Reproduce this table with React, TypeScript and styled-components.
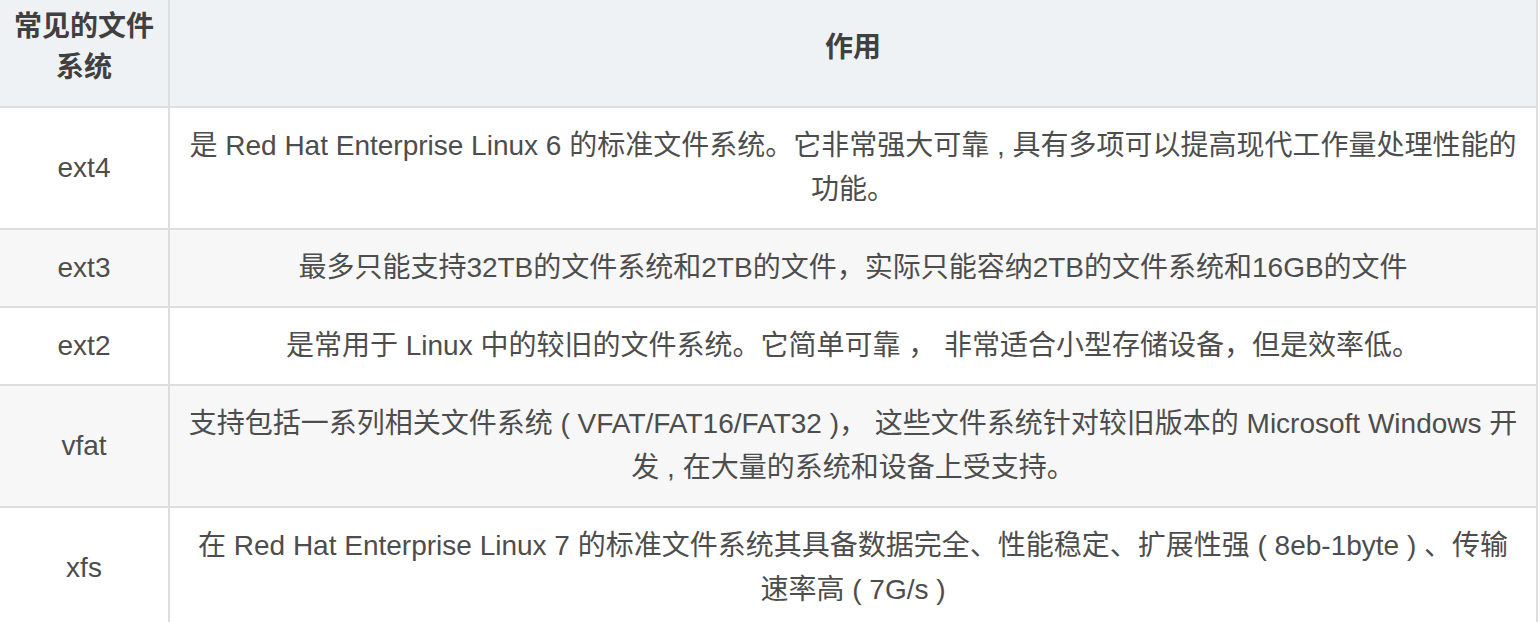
import styled, { createGlobalStyle } from "styled-components";

const GlobalStyle = createGlobalStyle`
    html, body {
        margin: 0;
        padding: 0;
        background: #ffffff;
    }
    body {
        font-family: "Liberation Sans", "Noto Sans CJK SC", sans-serif;
        color: #4d4d4d;
        overflow: hidden;
    }
`;

const Table = styled.table`
    width: 1538px;
    table-layout: fixed;
    border-collapse: separate;
    border-spacing: 0;
    font-size: 28px;
`;

const HeadCell = styled.th`
    background: #eff2f5;
    color: #404040;
    font-weight: 700;
    line-height: 41px;
    padding: 6px 10px 18px;
    text-align: center;
    vertical-align: middle;
    border-right: 2px solid #dedede;
    border-bottom: 2px solid #dedede;
`;

const Row = styled.tr<{ $striped?: boolean }>`
    background: ${props => (props.$striped ? "#f7f7f7" : "#ffffff")};
`;

const Cell = styled.td`
    line-height: 44px;
    padding: 16px 17px;
    text-align: center;
    vertical-align: middle;
    border-right: 2px solid #dedede;
    border-bottom: 2px solid #dedede;
`;

interface IFileSystem {
    name: string;
    desc: string;
}

const systems: IFileSystem[] = [
    {
        name: "ext4",
        desc: "是 Red Hat Enterprise Linux 6 的标准文件系统。它非常强大可靠 , 具有多项可以提高现代工作量处理性能的功能。",
    },
    {
        name: "ext3",
        desc: "最多只能支持32TB的文件系统和2TB的文件，实际只能容纳2TB的文件系统和16GB的文件",
    },
    {
        name: "ext2",
        desc: "是常用于 Linux 中的较旧的文件系统。它简单可靠 ， 非常适合小型存储设备，但是效率低。",
    },
    {
        name: "vfat",
        desc: "支持包括一系列相关文件系统 ( VFAT/FAT16/FAT32 )， 这些文件系统针对较旧版本的 Microsoft Windows 开发 , 在大量的系统和设备上受支持。",
    },
    {
        name: "xfs",
        desc: "在 Red Hat Enterprise Linux 7 的标准文件系统其具备数据完全、性能稳定、扩展性强 ( 8eb-1byte ) 、传输速率高 ( 7G/s )",
    },
];

function App() {
    return (
        <>
            <GlobalStyle />
            <Table>
                <colgroup>
                    <col style={{ width: 170 }} />
                    <col />
                </colgroup>
                <thead>
                    <tr>
                        <HeadCell>常见的文件系统</HeadCell>
                        <HeadCell>作用</HeadCell>
                    </tr>
                </thead>
                <tbody>
                    {systems.map((fs, i) => (
                        <Row key={fs.name} $striped={i % 2 === 1}>
                            <Cell>{fs.name}</Cell>
                            <Cell>{fs.desc}</Cell>
                        </Row>
                    ))}
                </tbody>
            </Table>
        </>
    );
}

export default App;
